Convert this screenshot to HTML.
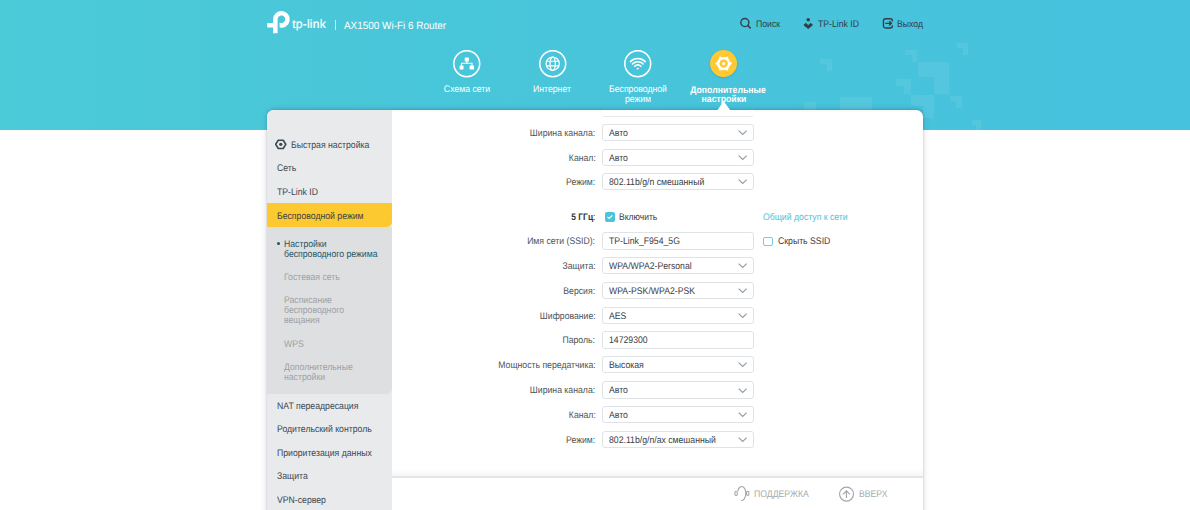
<!DOCTYPE html>
<html><head><meta charset="utf-8">
<style>
*{box-sizing:border-box;margin:0;padding:0}
html,body{width:1190px;height:510px;overflow:hidden;background:#fff;font-family:"Liberation Sans",sans-serif;position:relative}
.abs{position:absolute}
#hdr{position:absolute;left:0;top:0;width:1190px;height:129.5px;background:linear-gradient(to right,#4bcad8 0%,#48c5da 50%,#46c1de 100%);overflow:hidden}
.t{position:absolute;white-space:nowrap;font-size:9.6px;line-height:10px;text-rendering:geometricPrecision}
.px{position:absolute;background:rgba(255,255,255,0.075)}
.navc{position:absolute;width:27.4px;height:27.4px;border-radius:50%;border:1.6px solid #fff}
.navl{position:absolute;width:100px;text-align:center;color:#fff;font-size:9px;letter-spacing:-0.22px;line-height:10px}
#card{position:absolute;left:267px;top:110px;width:656px;height:420px;background:#fff;border-radius:6.5px 6.5px 0 0;box-shadow:0 0 7px rgba(40,50,65,0.15), 0 0 2px rgba(40,50,65,0.12), 0 -1px 3px rgba(0,40,60,0.12);overflow:hidden}
#side{position:absolute;left:0;top:0;width:124.5px;height:420px;background:#e9eaec}
.box{width:152px;height:17.4px;border:1px solid #e0e3e6;border-radius:3px;background:#fff}
#formclip{position:absolute;left:391.5px;top:110px;width:531.5px;height:366px;overflow:hidden}
#forminner{position:absolute;left:-391.5px;top:-110px;width:1190px;height:510px}
#sideclip{position:absolute;left:267px;top:110px;width:124.5px;height:400px;overflow:hidden}
#sideinner{position:absolute;left:-267px;top:-110px;width:1190px;height:510px}
</style></head>
<body>
<div id="hdr">
  <div class="px" style="left:819.8px;top:59.1px;width:7.0px;height:5.2px"></div><div class="px" style="left:826.8px;top:59.1px;width:5.2px;height:12.1px"></div><div class="px" style="left:904.5px;top:49.6px;width:7.2px;height:5.2px"></div><div class="px" style="left:911.7px;top:49.6px;width:5.2px;height:12.2px"></div><div class="px" style="left:917.6px;top:62.0px;width:16.3px;height:15.2px"></div><div class="px" style="left:933.9px;top:62.0px;width:15.2px;height:32.2px"></div><div class="px" style="left:956.5px;top:42.7px;width:6.7px;height:5.2px"></div><div class="px" style="left:963.2px;top:42.7px;width:5.2px;height:12.3px"></div><div class="px" style="left:895.8px;top:78.8px;width:8.1px;height:7.2px"></div><div class="px" style="left:903.9px;top:78.8px;width:7.2px;height:15.4px"></div><div class="px" style="left:911.1px;top:95.4px;width:11.5px;height:11.0px"></div><div class="px" style="left:922.6px;top:95.4px;width:11.0px;height:22.4px"></div><div class="px" style="left:950.0px;top:96.0px;width:6.4px;height:5.2px"></div><div class="px" style="left:956.4px;top:96.0px;width:5.2px;height:11.6px"></div><div class="px" style="left:971.8px;top:120.0px;width:4.4px;height:4.6px"></div><div class="px" style="left:976.2px;top:120.0px;width:4.6px;height:9.5px"></div><div class="px" style="left:840px;top:97px;width:32px;height:14px"></div><div class="px" style="left:804px;top:102px;width:12px;height:9px"></div>
  <svg class="abs" style="left:265px;top:9px" width="28" height="28" viewBox="0 0 28 28">
    <path d="M12.6 24.2 H8 V18.6 H2.2 V14.1 H8 V10.3 A8.4 8.4 0 1 1 14.6 18.5 V13.65 A3.8 3.8 0 1 0 12.6 10.3 Z" fill="#fff"/>
  </svg>
<div class="t" style="left:292.20px;top:19px;font-size:12px;color:#fff;letter-spacing:0.25px;font-weight:400;transform:scaleX(1);transform-origin:0 0;-webkit-text-stroke:0.2px #fff">tp-link</div><div class="abs" style="left:334.6px;top:20.2px;width:1.2px;height:9.4px;background:rgba(255,255,255,0.72)"></div><div class="t" style="left:343.70px;top:21px;font-size:10.5px;color:#fff;letter-spacing:0px;font-weight:400;transform:scaleX(0.945);transform-origin:0 0;">AX1500 Wi-Fi 6 Router</div>

  <svg class="abs" style="left:739px;top:17px" width="14" height="14" viewBox="0 0 14 14">
    <circle cx="5.85" cy="5.5" r="4.05" fill="none" stroke="#333d44" stroke-width="1.35"/>
    <path d="M8.9 8.6 L11.2 11" stroke="#333d44" stroke-width="1.6" stroke-linecap="round"/>
  </svg>
  <svg class="abs" style="left:802px;top:17px" width="12" height="13" viewBox="0 0 12 13">
    <circle cx="6.2" cy="2.8" r="1.75" fill="#333d44"/>
    <path d="M1.9 8.1 L3.7 6.2 L6.2 8.6 L8.7 6.2 L10.5 8.1 L6.2 11.6 Z" fill="#333d44" stroke="#333d44" stroke-width="0.9" stroke-linejoin="round"/>
  </svg>
  <svg class="abs" style="left:881px;top:17px" width="14" height="14" viewBox="0 0 14 14">
    <path d="M11.35 4.4 V3.75 A2 2 0 0 0 9.35 1.75 H4.45 A2 2 0 0 0 2.45 3.75 V8.95 A2 2 0 0 0 4.45 10.95 H9.35 A2 2 0 0 0 11.35 8.95 V8.3" fill="none" stroke="#333d44" stroke-width="1.35"/>
    <path d="M4.3 6.35 H10.4 M8.2 4.15 L10.4 6.35 L8.2 8.55" fill="none" stroke="#333d44" stroke-width="1.35"/>
  </svg>
  <svg class="abs" style="left:452.8px;top:49.7px" width="28" height="28" viewBox="0 0 28 28">
    <circle cx="13.75" cy="13.7" r="12.95" fill="none" stroke="#fff" stroke-width="1.55"/>
    <rect x="11.7" y="7.5" width="4.2" height="4.1" rx="0.6" fill="#fff"/>
    <path d="M13.8 11 V13.3 M8.5 16 V13.3 H19 V16" fill="none" stroke="#fff" stroke-width="1.1"/>
    <rect x="6.6" y="15.6" width="3.9" height="3.9" rx="0.6" fill="#fff"/>
    <rect x="16.6" y="15.6" width="4.4" height="3.9" rx="0.6" fill="#fff"/>
  </svg>
  <svg class="abs" style="left:538.6px;top:49.7px" width="28" height="28" viewBox="0 0 28 28">
    <circle cx="13.75" cy="13.7" r="12.95" fill="none" stroke="#fff" stroke-width="1.55"/>
    <circle cx="13.7" cy="13.7" r="6.6" fill="none" stroke="#fff" stroke-width="1.2"/>
    <ellipse cx="13.7" cy="13.7" rx="2.6" ry="6.6" fill="none" stroke="#fff" stroke-width="1.2"/>
    <path d="M7.2 11.3 H20.2 M7.2 15.9 H20.2" stroke="#fff" stroke-width="1.1"/>
  </svg>
  <svg class="abs" style="left:624px;top:49.7px" width="28" height="28" viewBox="0 0 28 28">
    <circle cx="13.75" cy="13.7" r="12.95" fill="none" stroke="#fff" stroke-width="1.55"/>
    <path d="M6.4 11.6 A10.5 10.5 0 0 1 21.2 11.6" fill="none" stroke="#fff" stroke-width="1.55" stroke-linecap="round"/>
    <path d="M8.5 13.9 A7.4 7.4 0 0 1 19.1 13.9" fill="none" stroke="#fff" stroke-width="1.55" stroke-linecap="round"/>
    <path d="M10.7 16.2 A4.3 4.3 0 0 1 16.9 16.2" fill="none" stroke="#fff" stroke-width="1.55" stroke-linecap="round"/>
    <path d="M12.5 18.4 L13.8 19.8 L15.1 18.4 A1.9 1.9 0 0 0 12.5 18.4 Z" fill="#fff"/>
  </svg>

  <div class="abs" style="left:709.6px;top:49.6px;width:27.3px;height:27.3px;border-radius:50%;background:#fec935;box-shadow:0 1px 3px rgba(0,0,0,0.12)"></div>
  <svg class="abs" style="left:709.6px;top:49.6px" width="28" height="28" viewBox="0 0 28 28">
    <path fill-rule="evenodd" d="M10.1 7.6 H17.3 L20.9 13.6 L17.3 19.6 H10.1 L6.5 13.6 Z M13.7 9.6 A4 4 0 1 0 13.71 9.6 Z" fill="#fff" stroke="#fff" stroke-width="0.8" stroke-linejoin="round"/>
    <circle cx="13.7" cy="13.6" r="4.1" fill="#fec935"/>
    <circle cx="13.7" cy="13.6" r="1.6" fill="#fff"/>
    <circle cx="10.1" cy="7.6" r="1" fill="#fff"/><circle cx="17.3" cy="7.6" r="1" fill="#fff"/><circle cx="20.9" cy="13.6" r="1" fill="#fff"/><circle cx="17.3" cy="19.6" r="1" fill="#fff"/><circle cx="10.1" cy="19.6" r="1" fill="#fff"/><circle cx="6.5" cy="13.6" r="1" fill="#fff"/>
  </svg>
</div>

<div class="t" style="left:406.80px;width:120px;text-align:center;top:85px;font-size:9.6px;color:#fff;letter-spacing:0px;font-weight:400;transform:scaleX(0.905);transform-origin:50% 0;">Схема сети</div><div class="t" style="left:492.30px;width:120px;text-align:center;top:85px;font-size:9.6px;color:#fff;letter-spacing:0px;font-weight:400;transform:scaleX(0.905);transform-origin:50% 0;">Интернет</div><div class="t" style="left:577.90px;width:120px;text-align:center;top:85px;font-size:9.6px;color:#fff;letter-spacing:0px;font-weight:400;transform:scaleX(0.905);transform-origin:50% 0;">Беспроводной</div><div class="t" style="left:578.00px;width:120px;text-align:center;top:95px;font-size:9.6px;color:#fff;letter-spacing:0px;font-weight:400;transform:scaleX(0.905);transform-origin:50% 0;">режим</div><div class="t" style="left:668.00px;width:120px;text-align:center;top:86px;font-size:9.6px;color:#fff;letter-spacing:0px;font-weight:700;transform:scaleX(0.905);transform-origin:50% 0;">Дополнительные</div><div class="t" style="left:663.60px;width:120px;text-align:center;top:95px;font-size:9.6px;color:#fff;letter-spacing:0px;font-weight:700;transform:scaleX(0.905);transform-origin:50% 0;">настройки</div>
<div class="t" style="left:755.80px;top:20px;font-size:9.6px;color:#333d44;letter-spacing:0px;font-weight:400;transform:scaleX(0.905);transform-origin:0 0;">Поиск</div><div class="t" style="left:818.00px;top:20px;font-size:9.6px;color:#333d44;letter-spacing:0px;font-weight:400;transform:scaleX(0.905);transform-origin:0 0;">TP-Link ID</div><div class="t" style="left:897.30px;top:20px;font-size:9.6px;color:#333d44;letter-spacing:0px;font-weight:400;transform:scaleX(0.905);transform-origin:0 0;">Выход</div>
<div id="card">
  <div id="side"></div>
</div>
<svg class="abs" style="left:717px;top:100px" width="14" height="10.5" viewBox="0 0 14 10.5"><path d="M0.3 10.5 L6.6 1.0 L13.4 10.5 Z" fill="#fff"/></svg>
<div id="sideclip"><div id="sideinner">
<svg class="abs" style="left:275px;top:139px" width="12" height="12" viewBox="0 0 12 12"><path d="M3.3 1.2 H8.2 L10.8 5.3 L8.2 9.5 H3.3 L0.6 5.3 Z" fill="none" stroke="#3d4850" stroke-width="1.6" stroke-linejoin="round"/><circle cx="5.75" cy="5.35" r="1.7" fill="#3d4850"/></svg>
<div class="t" style="left:290.50px;top:141px;font-size:9.6px;color:#3d4850;letter-spacing:0px;font-weight:400;transform:scaleX(0.905);transform-origin:0 0;">Быстрая настройка</div>
<div class="t" style="left:276.80px;top:164px;font-size:9.6px;color:#3d4850;letter-spacing:0px;font-weight:400;transform:scaleX(0.905);transform-origin:0 0;">Сеть</div>
<div class="t" style="left:276.80px;top:188px;font-size:9.6px;color:#3d4850;letter-spacing:0px;font-weight:400;transform:scaleX(0.905);transform-origin:0 0;">TP-Link ID</div>
<div class="abs" style="left:267px;top:203px;width:124.5px;height:23.5px;background:#fdc931;border-radius:0 0 5px 0"></div>
<div class="t" style="left:276.80px;top:212px;font-size:9.6px;color:#3d4245;letter-spacing:0px;font-weight:400;transform:scaleX(0.905);transform-origin:0 0;">Беспроводной режим</div>
<div class="abs" style="left:267px;top:226.5px;width:124.5px;height:167.2px;background:#dddfe1;border-radius:0 0 6px 0"></div>
<div class="abs" style="left:277.4px;top:241.9px;width:3px;height:3px;border-radius:50%;background:#1f5667"></div>
<div class="t" style="left:284.40px;top:240px;font-size:9.6px;color:#1f5667;letter-spacing:0px;font-weight:400;transform:scaleX(0.905);transform-origin:0 0;">Настройки</div><div class="t" style="left:284.40px;top:250px;font-size:9.6px;color:#1f5667;letter-spacing:0px;font-weight:400;transform:scaleX(0.905);transform-origin:0 0;">беспроводного режима</div>
<div class="t" style="left:284.40px;top:273px;font-size:9.6px;color:#9da1a5;letter-spacing:0px;font-weight:400;transform:scaleX(0.905);transform-origin:0 0;">Гостевая сеть</div>
<div class="t" style="left:284.40px;top:296px;font-size:9.6px;color:#9da1a5;letter-spacing:0px;font-weight:400;transform:scaleX(0.905);transform-origin:0 0;">Расписание</div><div class="t" style="left:284.40px;top:306px;font-size:9.6px;color:#9da1a5;letter-spacing:0px;font-weight:400;transform:scaleX(0.905);transform-origin:0 0;">беспроводного</div><div class="t" style="left:284.40px;top:316px;font-size:9.6px;color:#9da1a5;letter-spacing:0px;font-weight:400;transform:scaleX(0.905);transform-origin:0 0;">вещания</div>
<div class="t" style="left:284.40px;top:340px;font-size:9.6px;color:#9da1a5;letter-spacing:0px;font-weight:400;transform:scaleX(0.905);transform-origin:0 0;">WPS</div>
<div class="t" style="left:284.40px;top:363px;font-size:9.6px;color:#9da1a5;letter-spacing:0px;font-weight:400;transform:scaleX(0.905);transform-origin:0 0;">Дополнительные</div><div class="t" style="left:284.40px;top:373px;font-size:9.6px;color:#9da1a5;letter-spacing:0px;font-weight:400;transform:scaleX(0.905);transform-origin:0 0;">настройки</div>
<div class="t" style="left:276.80px;top:402px;font-size:9.6px;color:#3d4850;letter-spacing:0px;font-weight:400;transform:scaleX(0.905);transform-origin:0 0;">NAT переадресация</div>
<div class="t" style="left:276.80px;top:425px;font-size:9.6px;color:#3d4850;letter-spacing:0px;font-weight:400;transform:scaleX(0.905);transform-origin:0 0;">Родительский контроль</div>
<div class="t" style="left:276.80px;top:449px;font-size:9.6px;color:#3d4850;letter-spacing:0px;font-weight:400;transform:scaleX(0.905);transform-origin:0 0;">Приоритезация данных</div>
<div class="t" style="left:276.80px;top:472px;font-size:9.6px;color:#3d4850;letter-spacing:0px;font-weight:400;transform:scaleX(0.905);transform-origin:0 0;">Защита</div>
<div class="t" style="left:276.80px;top:496px;font-size:9.6px;color:#3d4850;letter-spacing:0px;font-weight:400;transform:scaleX(0.905);transform-origin:0 0;">VPN-сервер</div>
</div></div>
<div id="formclip"><div class="abs" style="left:0;top:0;width:531.5px;height:3px;background:linear-gradient(to bottom,rgba(0,0,0,0.03),rgba(0,0,0,0))"></div><div id="forminner">
<div class="abs box" style="left:602.4px;top:99.60px;border-color:transparent transparent #e6e8ea transparent"></div>
<div class="abs box" style="left:602.4px;top:124.00px"></div><div class="t" style="left:609.00px;top:129px;font-size:9.6px;color:#3b4045;letter-spacing:0px;font-weight:400;transform:scaleX(0.905);transform-origin:0 0;">Авто</div><svg class="abs" style="left:737.90px;top:130.30px" width="10" height="6" viewBox="0 0 10 6"><path d="M0.7 0.6 L4.7 4.5 L8.7 0.6" fill="none" stroke="#949a9f" stroke-width="1.1"/></svg>
<div class="t" style="right:594.60px;top:129px;font-size:9.6px;color:#4d5358;letter-spacing:0px;font-weight:400;transform:scaleX(0.905);transform-origin:100% 0;">Ширина канала:</div>
<div class="abs box" style="left:602.4px;top:148.60px"></div><div class="t" style="left:609.00px;top:154px;font-size:9.6px;color:#3b4045;letter-spacing:0px;font-weight:400;transform:scaleX(0.905);transform-origin:0 0;">Авто</div><svg class="abs" style="left:737.90px;top:154.90px" width="10" height="6" viewBox="0 0 10 6"><path d="M0.7 0.6 L4.7 4.5 L8.7 0.6" fill="none" stroke="#949a9f" stroke-width="1.1"/></svg>
<div class="t" style="right:594.60px;top:154px;font-size:9.6px;color:#4d5358;letter-spacing:0px;font-weight:400;transform:scaleX(0.905);transform-origin:100% 0;">Канал:</div>
<div class="abs box" style="left:602.4px;top:173.10px"></div><div class="t" style="left:609.00px;top:178px;font-size:9.6px;color:#3b4045;letter-spacing:0px;font-weight:400;transform:scaleX(0.905);transform-origin:0 0;">802.11b/g/n смешанный</div><svg class="abs" style="left:737.90px;top:179.40px" width="10" height="6" viewBox="0 0 10 6"><path d="M0.7 0.6 L4.7 4.5 L8.7 0.6" fill="none" stroke="#949a9f" stroke-width="1.1"/></svg>
<div class="t" style="right:594.60px;top:178px;font-size:9.6px;color:#4d5358;letter-spacing:0px;font-weight:400;transform:scaleX(0.905);transform-origin:100% 0;">Режим:</div>
<div class="abs box" style="left:602.4px;top:232.20px"></div><div class="t" style="left:609.00px;top:237px;font-size:9.6px;color:#3b4045;letter-spacing:0px;font-weight:400;transform:scaleX(0.905);transform-origin:0 0;">TP-Link_F954_5G</div>
<div class="t" style="right:594.60px;top:237px;font-size:9.6px;color:#4d5358;letter-spacing:0px;font-weight:400;transform:scaleX(0.905);transform-origin:100% 0;">Имя сети (SSID):</div>
<div class="abs box" style="left:602.4px;top:257.00px"></div><div class="t" style="left:609.00px;top:262px;font-size:9.6px;color:#3b4045;letter-spacing:0px;font-weight:400;transform:scaleX(0.905);transform-origin:0 0;">WPA/WPA2-Personal</div><svg class="abs" style="left:737.90px;top:263.30px" width="10" height="6" viewBox="0 0 10 6"><path d="M0.7 0.6 L4.7 4.5 L8.7 0.6" fill="none" stroke="#949a9f" stroke-width="1.1"/></svg>
<div class="t" style="right:594.60px;top:262px;font-size:9.6px;color:#4d5358;letter-spacing:0px;font-weight:400;transform:scaleX(0.905);transform-origin:100% 0;">Защита:</div>
<div class="abs box" style="left:602.4px;top:282.00px"></div><div class="t" style="left:609.00px;top:287px;font-size:9.6px;color:#3b4045;letter-spacing:0px;font-weight:400;transform:scaleX(0.905);transform-origin:0 0;">WPA-PSK/WPA2-PSK</div><svg class="abs" style="left:737.90px;top:288.30px" width="10" height="6" viewBox="0 0 10 6"><path d="M0.7 0.6 L4.7 4.5 L8.7 0.6" fill="none" stroke="#949a9f" stroke-width="1.1"/></svg>
<div class="t" style="right:594.60px;top:287px;font-size:9.6px;color:#4d5358;letter-spacing:0px;font-weight:400;transform:scaleX(0.905);transform-origin:100% 0;">Версия:</div>
<div class="abs box" style="left:602.4px;top:306.50px"></div><div class="t" style="left:609.00px;top:312px;font-size:9.6px;color:#3b4045;letter-spacing:0px;font-weight:400;transform:scaleX(0.905);transform-origin:0 0;">AES</div><svg class="abs" style="left:737.90px;top:312.80px" width="10" height="6" viewBox="0 0 10 6"><path d="M0.7 0.6 L4.7 4.5 L8.7 0.6" fill="none" stroke="#949a9f" stroke-width="1.1"/></svg>
<div class="t" style="right:594.60px;top:312px;font-size:9.6px;color:#4d5358;letter-spacing:0px;font-weight:400;transform:scaleX(0.905);transform-origin:100% 0;">Шифрование:</div>
<div class="abs box" style="left:602.4px;top:331.30px"></div><div class="t" style="left:609.00px;top:336px;font-size:9.6px;color:#3b4045;letter-spacing:0px;font-weight:400;transform:scaleX(0.905);transform-origin:0 0;">14729300</div>
<div class="t" style="right:594.60px;top:336px;font-size:9.6px;color:#4d5358;letter-spacing:0px;font-weight:400;transform:scaleX(0.905);transform-origin:100% 0;">Пароль:</div>
<div class="abs box" style="left:602.4px;top:356.10px"></div><div class="t" style="left:609.00px;top:361px;font-size:9.6px;color:#3b4045;letter-spacing:0px;font-weight:400;transform:scaleX(0.905);transform-origin:0 0;">Высокая</div><svg class="abs" style="left:737.90px;top:362.40px" width="10" height="6" viewBox="0 0 10 6"><path d="M0.7 0.6 L4.7 4.5 L8.7 0.6" fill="none" stroke="#949a9f" stroke-width="1.1"/></svg>
<div class="t" style="right:594.60px;top:361px;font-size:9.6px;color:#4d5358;letter-spacing:0px;font-weight:400;transform:scaleX(0.905);transform-origin:100% 0;">Мощность передатчика:</div>
<div class="abs box" style="left:602.4px;top:381.20px"></div><div class="t" style="left:609.00px;top:386px;font-size:9.6px;color:#3b4045;letter-spacing:0px;font-weight:400;transform:scaleX(0.905);transform-origin:0 0;">Авто</div><svg class="abs" style="left:737.90px;top:387.50px" width="10" height="6" viewBox="0 0 10 6"><path d="M0.7 0.6 L4.7 4.5 L8.7 0.6" fill="none" stroke="#949a9f" stroke-width="1.1"/></svg>
<div class="t" style="right:594.60px;top:386px;font-size:9.6px;color:#4d5358;letter-spacing:0px;font-weight:400;transform:scaleX(0.905);transform-origin:100% 0;">Ширина канала:</div>
<div class="abs box" style="left:602.4px;top:406.00px"></div><div class="t" style="left:609.00px;top:411px;font-size:9.6px;color:#3b4045;letter-spacing:0px;font-weight:400;transform:scaleX(0.905);transform-origin:0 0;">Авто</div><svg class="abs" style="left:737.90px;top:412.30px" width="10" height="6" viewBox="0 0 10 6"><path d="M0.7 0.6 L4.7 4.5 L8.7 0.6" fill="none" stroke="#949a9f" stroke-width="1.1"/></svg>
<div class="t" style="right:594.60px;top:411px;font-size:9.6px;color:#4d5358;letter-spacing:0px;font-weight:400;transform:scaleX(0.905);transform-origin:100% 0;">Канал:</div>
<div class="abs box" style="left:602.4px;top:430.80px"></div><div class="t" style="left:609.00px;top:436px;font-size:9.6px;color:#3b4045;letter-spacing:0px;font-weight:400;transform:scaleX(0.905);transform-origin:0 0;">802.11b/g/n/ax смешанный</div><svg class="abs" style="left:737.90px;top:437.10px" width="10" height="6" viewBox="0 0 10 6"><path d="M0.7 0.6 L4.7 4.5 L8.7 0.6" fill="none" stroke="#949a9f" stroke-width="1.1"/></svg>
<div class="t" style="right:594.60px;top:436px;font-size:9.6px;color:#4d5358;letter-spacing:0px;font-weight:400;transform:scaleX(0.905);transform-origin:100% 0;">Режим:</div>
<div class="t" style="right:594.60px;top:213px;font-size:9.6px;color:#2f3438;letter-spacing:0px;font-weight:700;transform:scaleX(0.88);transform-origin:100% 0;">5 ГГц<span style="font-weight:400">:</span></div>
<div class="abs" style="left:604.9px;top:212px;width:9.9px;height:9.8px;border-radius:2px;background:#4bc3d8"></div>
<svg class="abs" style="left:604.9px;top:212px" width="10" height="10" viewBox="0 0 10 10"><path d="M2.5 4.9 L4.2 6.5 L7.3 3.4" fill="none" stroke="#fff" stroke-width="1.25"/></svg>
<div class="t" style="left:619.40px;top:213px;font-size:9.6px;color:#3b4045;letter-spacing:0px;font-weight:400;transform:scaleX(0.89);transform-origin:0 0;">Включить</div>
<div class="t" style="left:762.70px;top:213px;font-size:9.6px;color:#4bc3d8;letter-spacing:0px;font-weight:400;transform:scaleX(0.905);transform-origin:0 0;">Общий доступ к сети</div>
<div class="abs" style="left:763px;top:236.5px;width:9.9px;height:9.9px;border-radius:2px;border:1px solid #6fd0e0;background:#fff"></div>
<div class="t" style="left:777.80px;top:237px;font-size:9.6px;color:#3b4045;letter-spacing:0px;font-weight:400;transform:scaleX(0.905);transform-origin:0 0;">Скрыть SSID</div>
</div></div>
<div class="abs" style="left:391.5px;top:469px;width:531.5px;height:7px;background:linear-gradient(to bottom, rgba(0,0,0,0), rgba(0,0,0,0.035))"></div>
<div class="abs" style="left:391.5px;top:476px;width:531.5px;height:2px;background:#e3e5e7"></div>
<svg class="abs" style="left:730px;top:482px" width="22" height="22" viewBox="0 0 22 22"><path d="M7.75 9.1 A4.1 7 0 1 1 11.24 18.47" fill="none" stroke="#a3a7ab" stroke-width="1.15"/><rect x="4.9" y="9.2" width="2.4" height="4.2" rx="1.1" fill="none" stroke="#a3a7ab" stroke-width="1.1"/><rect x="16.6" y="9.2" width="2.3" height="4.2" rx="1.1" fill="none" stroke="#a3a7ab" stroke-width="1.1"/></svg>
<div class="t" style="left:753.90px;top:490px;font-size:9.6px;color:#a8acb0;letter-spacing:0px;font-weight:400;transform:scaleX(0.905);transform-origin:0 0;">ПОДДЕРЖКА</div>
<svg class="abs" style="left:838px;top:485.5px" width="17" height="17" viewBox="0 0 17 17"><circle cx="8.55" cy="8.05" r="7" fill="none" stroke="#a3a7ab" stroke-width="1.15"/><path d="M8.45 12.1 V5.0 M5.0 8.3 L8.45 4.85 L11.9 8.3" fill="none" stroke="#a3a7ab" stroke-width="1.15"/></svg>
<div class="t" style="left:858.80px;top:490px;font-size:9.6px;color:#a8acb0;letter-spacing:0px;font-weight:400;transform:scaleX(0.905);transform-origin:0 0;">ВВЕРХ</div>
</body></html>
